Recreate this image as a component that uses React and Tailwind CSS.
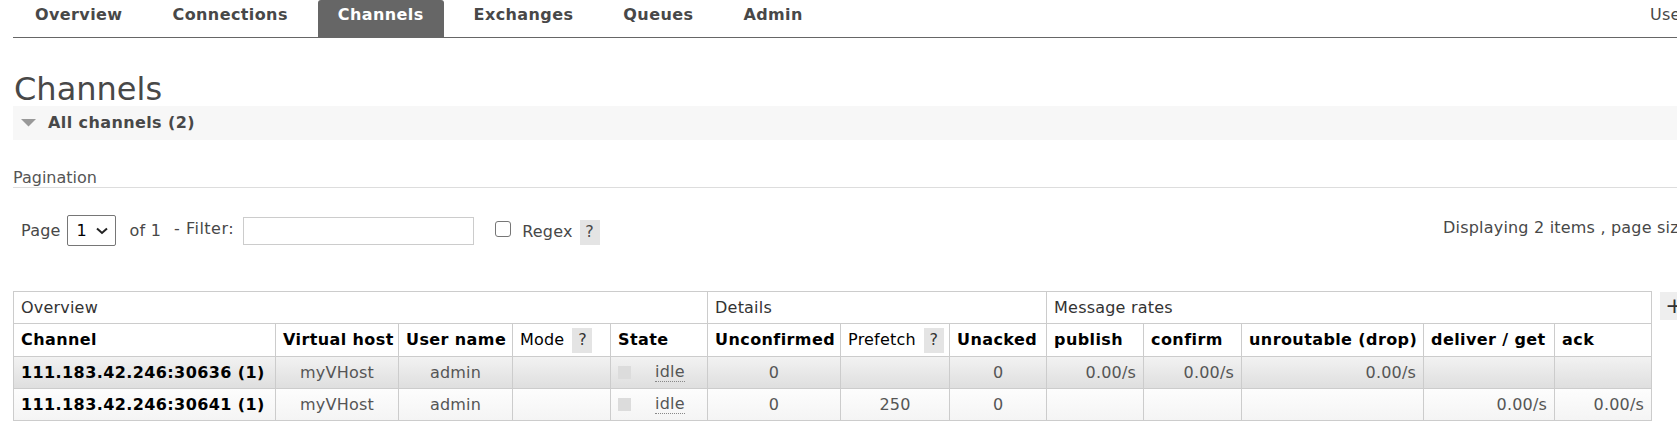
import React from "react";

const tabs = ["Overview", "Connections", "Channels", "Exchanges", "Queues", "Admin"];

// column widths in px, left to right
const cols = [262, 123, 114, 98, 97, 133, 109, 97, 97, 98, 182, 131, 97];

const rows = [
  {
    name: "111.183.42.246:30636 (1)",
    prefetch: "",
    publish: "0.00/s",
    confirm: "0.00/s",
    unroutable: "0.00/s",
    deliver: "",
    ack: "",
    alt: true,
  },
  {
    name: "111.183.42.246:30641 (1)",
    prefetch: "250",
    publish: "",
    confirm: "",
    unroutable: "",
    deliver: "0.00/s",
    ack: "0.00/s",
    alt: false,
  },
];

const Help = () => (
  <span className="inline-flex items-center justify-center w-[20px] h-[25px] bg-[#e4e4e4] text-[#333] font-normal ml-[8px] align-middle tracking-normal">
    ?
  </span>
);

export default function App() {
  const th = "border border-[#ccc] px-[7px] text-left whitespace-nowrap";
  const td = "border border-[#ccc] px-[7px] whitespace-nowrap text-[#555]";

  return (
    <div className="w-[1677px] h-[430px] overflow-hidden bg-white text-[16px] tracking-[0.2px] text-[#484848] font-['DejaVu_Sans',Verdana,sans-serif]">
      <div className="w-[1960px]">
        {/* top nav */}
        <div className="flex ml-[13px] border-b border-[#666] h-[38px]">
          <div className="flex w-[1637px] shrink-0 pl-[2px]">
            {tabs.map((t) => (
              <div
                key={t}
                className={
                  "h-[37px] px-[20px] mr-[10px] pt-[5px] leading-[20px] font-bold tracking-[0.4px] rounded-t-[3px] " +
                  (t === "Channels" ? "bg-[#666] text-white" : "text-[#484848]")
                }
              >
                {t}
              </div>
            ))}
          </div>
          <div className="pt-[5px] leading-[20px] whitespace-nowrap">User admin</div>
        </div>

        <div className="pl-[13px]">
          <h1 className="mt-[34px] leading-[34px] text-[32px] tracking-normal font-normal pl-[1px] text-[#484848]">
            Channels
          </h1>

          <div className="h-[34px] bg-[#f7f7f7] flex items-center">
            <svg width="15" height="8" viewBox="0 0 15 8" className="ml-[8px] mr-[12px]">
              <polygon points="0,0 15,0 7.5,7.5" fill="#999" />
            </svg>
            <span className="font-bold tracking-[0.4px] text-[#484848]">All channels (2)</span>
          </div>

          <div className="mt-[29px] h-[19px] leading-[18px] border-b border-[#ddd] text-[#555] tracking-normal">
            Pagination
          </div>

          <div className="flex items-center mt-[27px] h-[31px]">
            <div className="flex items-center w-[1430px] shrink-0 pl-[8px]">
              <span>Page</span>
              <div className="ml-[6px] w-[49px] h-[31px] border border-[#767676] rounded-[2px] flex items-center pl-[9px] text-black">
                <span>1</span>
                <svg width="12" height="8" viewBox="0 0 12 8" className="ml-[9px]">
                  <polyline points="1,1.5 6,6 11,1.5" fill="none" stroke="#222" strokeWidth="2" />
                </svg>
              </div>
              <span className="ml-[14px]">of 1</span>
              <span className="ml-[13px] -mt-[3px] tracking-[0.5px]">- Filter:</span>
              <div className="ml-[9px] w-[231px] h-[28px] border border-[#ccc]" />
              <div className="ml-[21px] w-[16px] h-[16px] border border-[#767676] rounded-[3px] -mt-[3px]" />
              <span className="ml-[11px] mt-[3px]">Regex</span>
              <span className="inline-flex items-center justify-center w-[20px] h-[25px] bg-[#e4e4e4] ml-[7px] mt-[3px]">
                ?
              </span>
            </div>
            <div className="whitespace-nowrap -mt-[6px]">Displaying 2 items , page size up to:</div>
          </div>

          <div className="flex items-start mt-[45px]">
            <table className="border-collapse table-fixed w-[1638px] shrink-0">
              <colgroup>
                {cols.map((w, i) => (
                  <col key={i} style={{ width: w }} />
                ))}
              </colgroup>
              <thead>
                <tr className="h-[32px]">
                  <th colSpan={5} className={th + " font-normal text-[#333]"}>Overview</th>
                  <th colSpan={3} className={th + " font-normal text-[#333]"}>Details</th>
                  <th colSpan={5} className={th + " font-normal text-[#333]"}>Message rates</th>
                </tr>
                <tr className="h-[33px] text-black tracking-[0.4px]">
                  <th className={th}>Channel</th>
                  <th className={th}>Virtual host</th>
                  <th className={th}>User name</th>
                  <th className={th + " font-normal tracking-[0.2px]"}>
                    Mode
                    <Help />
                  </th>
                  <th className={th}>State</th>
                  <th className={th}>Unconfirmed</th>
                  <th className={th + " font-normal tracking-[0.2px]"}>
                    Prefetch
                    <Help />
                  </th>
                  <th className={th}>Unacked</th>
                  <th className={th}>publish</th>
                  <th className={th}>confirm</th>
                  <th className={th}>unroutable (drop)</th>
                  <th className={th}>deliver / get</th>
                  <th className={th}>ack</th>
                </tr>
              </thead>
              <tbody>
                {rows.map((r) => (
                  <tr
                    key={r.name}
                    className={
                      "h-[32px] " +
                      (r.alt
                        ? "bg-gradient-to-b from-[#f2f2f2] to-[#dedede]"
                        : "bg-gradient-to-b from-[#fdfdfd] to-[#f4f4f4]")
                    }
                  >
                    <td className={td + " font-bold text-black tracking-[0.4px]"}>{r.name}</td>
                    <td className={td + " text-center"}>myVHost</td>
                    <td className={td + " text-center"}>admin</td>
                    <td className={td}></td>
                    <td className={td}>
                      <div className="flex items-center">
                        <span className="w-[13px] h-[13px] bg-[#dcdcdc]" />
                        <span className="ml-[24px] border-b border-dotted border-[#888] leading-[18px]">idle</span>
                      </div>
                    </td>
                    <td className={td + " text-center"}>0</td>
                    <td className={td + " text-center"}>{r.prefetch}</td>
                    <td className={td + " text-center"}>0</td>
                    <td className={td + " text-right"}>{r.publish}</td>
                    <td className={td + " text-right"}>{r.confirm}</td>
                    <td className={td + " text-right"}>{r.unroutable}</td>
                    <td className={td + " text-right"}>{r.deliver}</td>
                    <td className={td + " text-right"}>{r.ack}</td>
                  </tr>
                ))}
              </tbody>
            </table>
            <div className="ml-[8px] mt-[1px] w-[34px] h-[28px] bg-[#eee] flex items-center pl-[5px] text-[22px] leading-none text-[#333]">
              +
            </div>
          </div>
        </div>
      </div>
    </div>
  );
}
